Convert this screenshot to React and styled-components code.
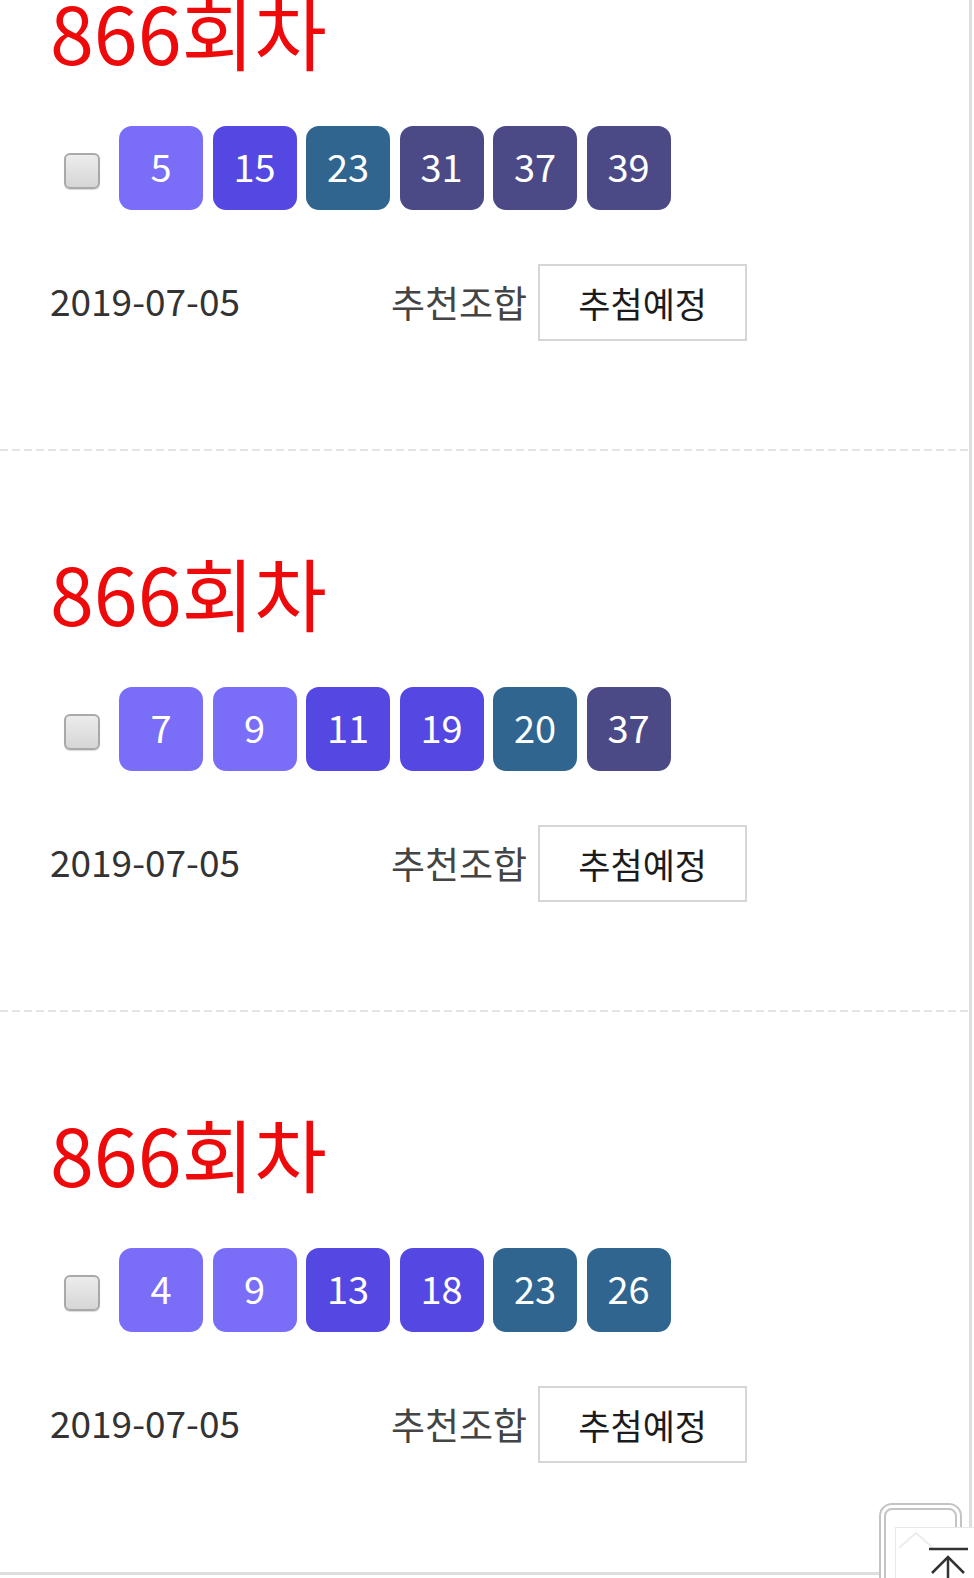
import React from "react";
import styled, { createGlobalStyle } from "styled-components";

const GlobalStyle = createGlobalStyle`
  html, body { margin: 0; padding: 0; background: #fff; }
  body { font-family: "Noto Sans CJK KR", "Noto Sans", sans-serif; }
`;

const Page = styled.div`
  box-sizing: border-box;
  width: 972px;
  height: 1575px;
  border-right: 3px solid #dedede;
  border-bottom: 3px solid #dedede;
  overflow: hidden;
  background: #fff;
`;

const List = styled.div`
  margin-top: -110px;
`;

const Card = styled.section`
  padding: 101px 0 110px 50px;
  background-image: repeating-linear-gradient(
    to right,
    #e3e3e3 0 8px,
    transparent 8px 12px
  );
  background-size: 100% 2px;
  background-position: left bottom;
  background-repeat: no-repeat;
  &:last-child { background-image: none; }
`;

const Title = styled.h2`
  margin: 0;
  font-family: "Noto Sans CJK KR", sans-serif;
  font-weight: 400;
  font-size: 79px;
  line-height: 79px;
  color: #ee0a0a;
`;

const BallRow = styled.div`
  display: flex;
  align-items: center;
  margin-top: 56px;
  height: 84px;
`;

const Check = styled.input.attrs({ type: "checkbox" })`
  appearance: none;
  -webkit-appearance: none;
  box-sizing: border-box;
  width: 36px;
  height: 36px;
  margin: 6px 19px 0 14px;
  border: 2px solid #a9a9a9;
  border-radius: 6px;
  background: linear-gradient(#ececec, #d6d6d6);
  box-shadow: 0 1px 1px rgba(0, 0, 0, 0.15);
`;

const Balls = styled.div`
  display: flex;
  gap: 9.5px;
`;

const ballColors = {
  light: "#7a6ef9",
  medium: "#5548e2",
  teal: "#30658f",
  dark: "#4b4a87",
};

const Ball = styled.div`
  box-sizing: border-box;
  width: 84px;
  height: 84px;
  padding-bottom: 5px;
  border-radius: 13px;
  background: ${(p) => ballColors[p.$tone]};
  color: #fff;
  display: flex;
  align-items: center;
  justify-content: center;
  font-family: "Noto Sans CJK KR", sans-serif;
  font-size: 38px;
  line-height: 1;
`;

const InfoRow = styled.div`
  display: flex;
  align-items: center;
  margin-top: 54px;
`;

const DateText = styled.span`
  width: 341px;
  padding-bottom: 5px;
  font-size: 37px;
  line-height: 1;
  color: #333;
`;

const Label = styled.span`
  font-size: 37px;
  line-height: 1;
  color: #444;
  margin-right: 11px;
`;

const StatusButton = styled.button`
  box-sizing: border-box;
  width: 209px;
  height: 77px;
  border: 2px solid #d6d6d6;
  background: #fff;
  padding: 0;
  font-family: "Noto Sans CJK KR", sans-serif;
  font-size: 35px;
  color: #1c1c1c;
  display: flex;
  align-items: center;
  justify-content: center;
`;

const TopWidget = styled.div`
  position: fixed;
  right: 0;
  bottom: 0;
  width: 95px;
  height: 75px;
`;

const Frame = styled.div`
  position: absolute;
  left: 0;
  top: 0;
  box-sizing: border-box;
  width: 83px;
  height: 100px;
  border: 2px solid #c4c4c4;
  border-radius: 13px;
  background: #fff;
  &::before {
    content: "";
    position: absolute;
    inset: 3px;
    border: 2px solid #c4c4c4;
    border-radius: 8px;
  }
`;

const Panel = styled.div`
  position: absolute;
  left: 16px;
  top: 24px;
  right: 0;
  bottom: 0;
  background: #fff;
  border-left: 1px solid #e8e8e8;
  border-top: 1px solid #e8e8e8;
`;

const ArrowIcon = styled.svg`
  display: block;
`;

const tone = (n) => (n < 10 ? "light" : n < 20 ? "medium" : n < 30 ? "teal" : "dark");

const draws = [
  { round: 866, nums: [5, 15, 23, 31, 37, 39], date: "2019-07-05" },
  { round: 866, nums: [7, 9, 11, 19, 20, 37], date: "2019-07-05" },
  { round: 866, nums: [4, 9, 13, 18, 23, 26], date: "2019-07-05" },
];

export default function App() {
  return (
    <>
      <GlobalStyle />
      <Page>
        <List>
          {draws.map((d, i) => (
            <Card key={i}>
              <Title>{d.round}회차</Title>
              <BallRow>
                <Check />
                <Balls>
                  {d.nums.map((n) => (
                    <Ball key={n} $tone={tone(n)}>
                      {n}
                    </Ball>
                  ))}
                </Balls>
              </BallRow>
              <InfoRow>
                <DateText>{d.date}</DateText>
                <Label>추천조합</Label>
                <StatusButton>추첨예정</StatusButton>
              </InfoRow>
            </Card>
          ))}
        </List>
      </Page>
      <TopWidget>
        <Frame />
        <Panel>
          <ArrowIcon width="79" height="51" viewBox="0 0 79 51" fill="none">
            <path d="M3 20 L20 5 L37 20" stroke="#ededed" strokeWidth="2" />
            <path d="M33 21 H72" stroke="#333" strokeWidth="2.5" />
            <path d="M36 45 L52 29 L68 45" stroke="#333" strokeWidth="2.5" />
            <path d="M52 29 V51" stroke="#333" strokeWidth="2.5" />
          </ArrowIcon>
        </Panel>
      </TopWidget>
    </>
  );
}
